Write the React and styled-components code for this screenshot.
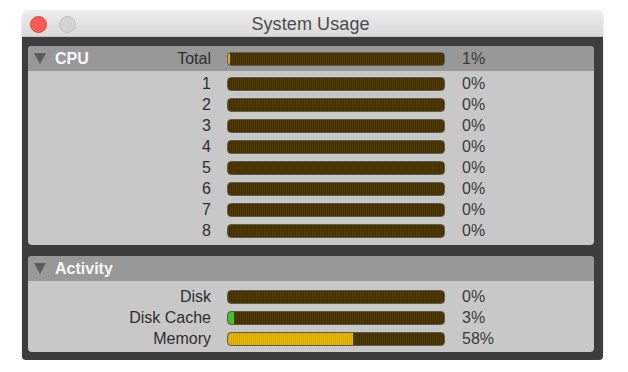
import React from "react";
import styled, { createGlobalStyle } from "styled-components";

const GlobalStyle = createGlobalStyle`
  html, body { margin: 0; padding: 0; background: #ffffff; }
  body { font-family: "Liberation Sans", Arial, sans-serif; }
`;

const Window = styled.div`
  margin: 11px 0 0 22px;
  width: 581px;
  display: flex;
  flex-direction: column;
  border-radius: 5px 5px 4px 4px;
  overflow: hidden;
  box-shadow: 0 0 0 0.5px rgba(0,0,0,0.12);
`;

const TitleBar = styled.div`
  height: 26px;
  display: grid;
  grid-template-columns: 1fr auto 1fr;
  align-items: center;
  padding: 2px 8px 0;
  background: linear-gradient(#ededed, #d9d9d9);
  border-bottom: 1px solid #c4c4c4;
  box-sizing: border-box;
`;

const Lights = styled.div`
  display: flex;
  gap: 12px;
  align-items: center;
`;

const Light = styled.span`
  width: 17px;
  height: 17px;
  border-radius: 50%;
  box-sizing: border-box;
  background: ${p => (p.$red ? "#fc5b54" : "#d3d3d3")};
  border: 1px solid ${p => (p.$red ? "#e2463f" : "#c0c0c0")};
`;

const Title = styled.div`
  font-size: 18px;
  color: #4c4c4c;
  margin-left: -4px;
  letter-spacing: 0.1px;
`;

const Body = styled.div`
  background: #3d3d3d;
  padding: 9px 9px 8px 6px;
  display: flex;
  flex-direction: column;
  gap: 11px;
`;

const Panel = styled.div`
  background: #c8c8c8;
  border-radius: 4px;
  overflow: hidden;
`;

const Grid = styled.div`
  display: grid;
  grid-template-columns: 183px 218px auto;
  column-gap: 16px;
  align-items: center;
  font-size: 16px;
`;

const Header = styled(Grid)`
  height: 25px;
  background: #989898;
`;

const HeaderLead = styled.div`
  display: flex;
  align-items: center;
  justify-content: space-between;
`;

const HeaderTitle = styled.div`
  display: flex;
  align-items: center;
  gap: 9px;
  padding-left: 6px;
  color: #f7f7f7;
  font-weight: bold;
  font-size: 16px;
`;

const Rows = styled.div`
  padding: ${p => p.$pad};
  display: flex;
  flex-direction: column;
`;

const Row = styled(Grid)`
  height: 21px;
`;

const Label = styled.div`
  text-align: right;
  color: #2e2e2e;
  line-height: 21px;
`;

const Percent = styled.div`
  color: #3a3a3a;
  padding-left: 1px;
  line-height: 21px;
`;

const Bar = styled.div`
  width: 218px;
  height: 14px;
  box-sizing: border-box;
  border: 1.5px solid #5a5a5a;
  border-radius: 4px;
  overflow: hidden;
  background: repeating-linear-gradient(90deg, #4f3a00 0 1px, #432f00 1px 2px);
  display: flex;
`;

const Fill = styled.div`
  height: 100%;
  border-radius: 2px 0 0 2px;
  background: ${p =>
    p.$green
      ? "#44c51c"
      : "repeating-linear-gradient(90deg, #e9ba00 0 1px, #d6a800 1px 2px)"};
`;

const Triangle = () => (
  <svg width="12" height="11" viewBox="0 0 12 11">
    <path d="M0 0 L12 0 L6 11 Z" fill="#5c5c5c" />
  </svg>
);

const Meter = ({ value, green }) => (
  <Bar>
    {value > 0 && <Fill $green={green} style={{ width: `${value}%` }} />}
  </Bar>
);

const cpu = [1, 2, 3, 4, 5, 6, 7, 8];
const activity = [
  { label: "Disk", value: 0 },
  { label: "Disk Cache", value: 3, green: true },
  { label: "Memory", value: 58 },
];

export default function App() {
  return (
    <>
      <GlobalStyle />
      <Window>
        <TitleBar>
          <Lights>
            <Light $red />
            <Light />
          </Lights>
          <Title>System Usage</Title>
          <div />
        </TitleBar>
        <Body>
          <Panel>
            <Header>
              <HeaderLead>
                <HeaderTitle>
                  <Triangle />
                  CPU
                </HeaderTitle>
                <Label>Total</Label>
              </HeaderLead>
              <Meter value={1} />
              <Percent>1%</Percent>
            </Header>
            <Rows $pad="2px 0 4px">
              {cpu.map(n => (
                <Row key={n}>
                  <Label>{n}</Label>
                  <Meter value={0} />
                  <Percent>0%</Percent>
                </Row>
              ))}
            </Rows>
          </Panel>
          <Panel>
            <Header>
              <HeaderLead>
                <HeaderTitle>
                  <Triangle />
                  Activity
                </HeaderTitle>
              </HeaderLead>
              <div />
              <div />
            </Header>
            <Rows $pad="5px 0 3px">
              {activity.map(a => (
                <Row key={a.label}>
                  <Label>{a.label}</Label>
                  <Meter value={a.value} green={a.green} />
                  <Percent>{a.value}%</Percent>
                </Row>
              ))}
            </Rows>
          </Panel>
        </Body>
      </Window>
    </>
  );
}
